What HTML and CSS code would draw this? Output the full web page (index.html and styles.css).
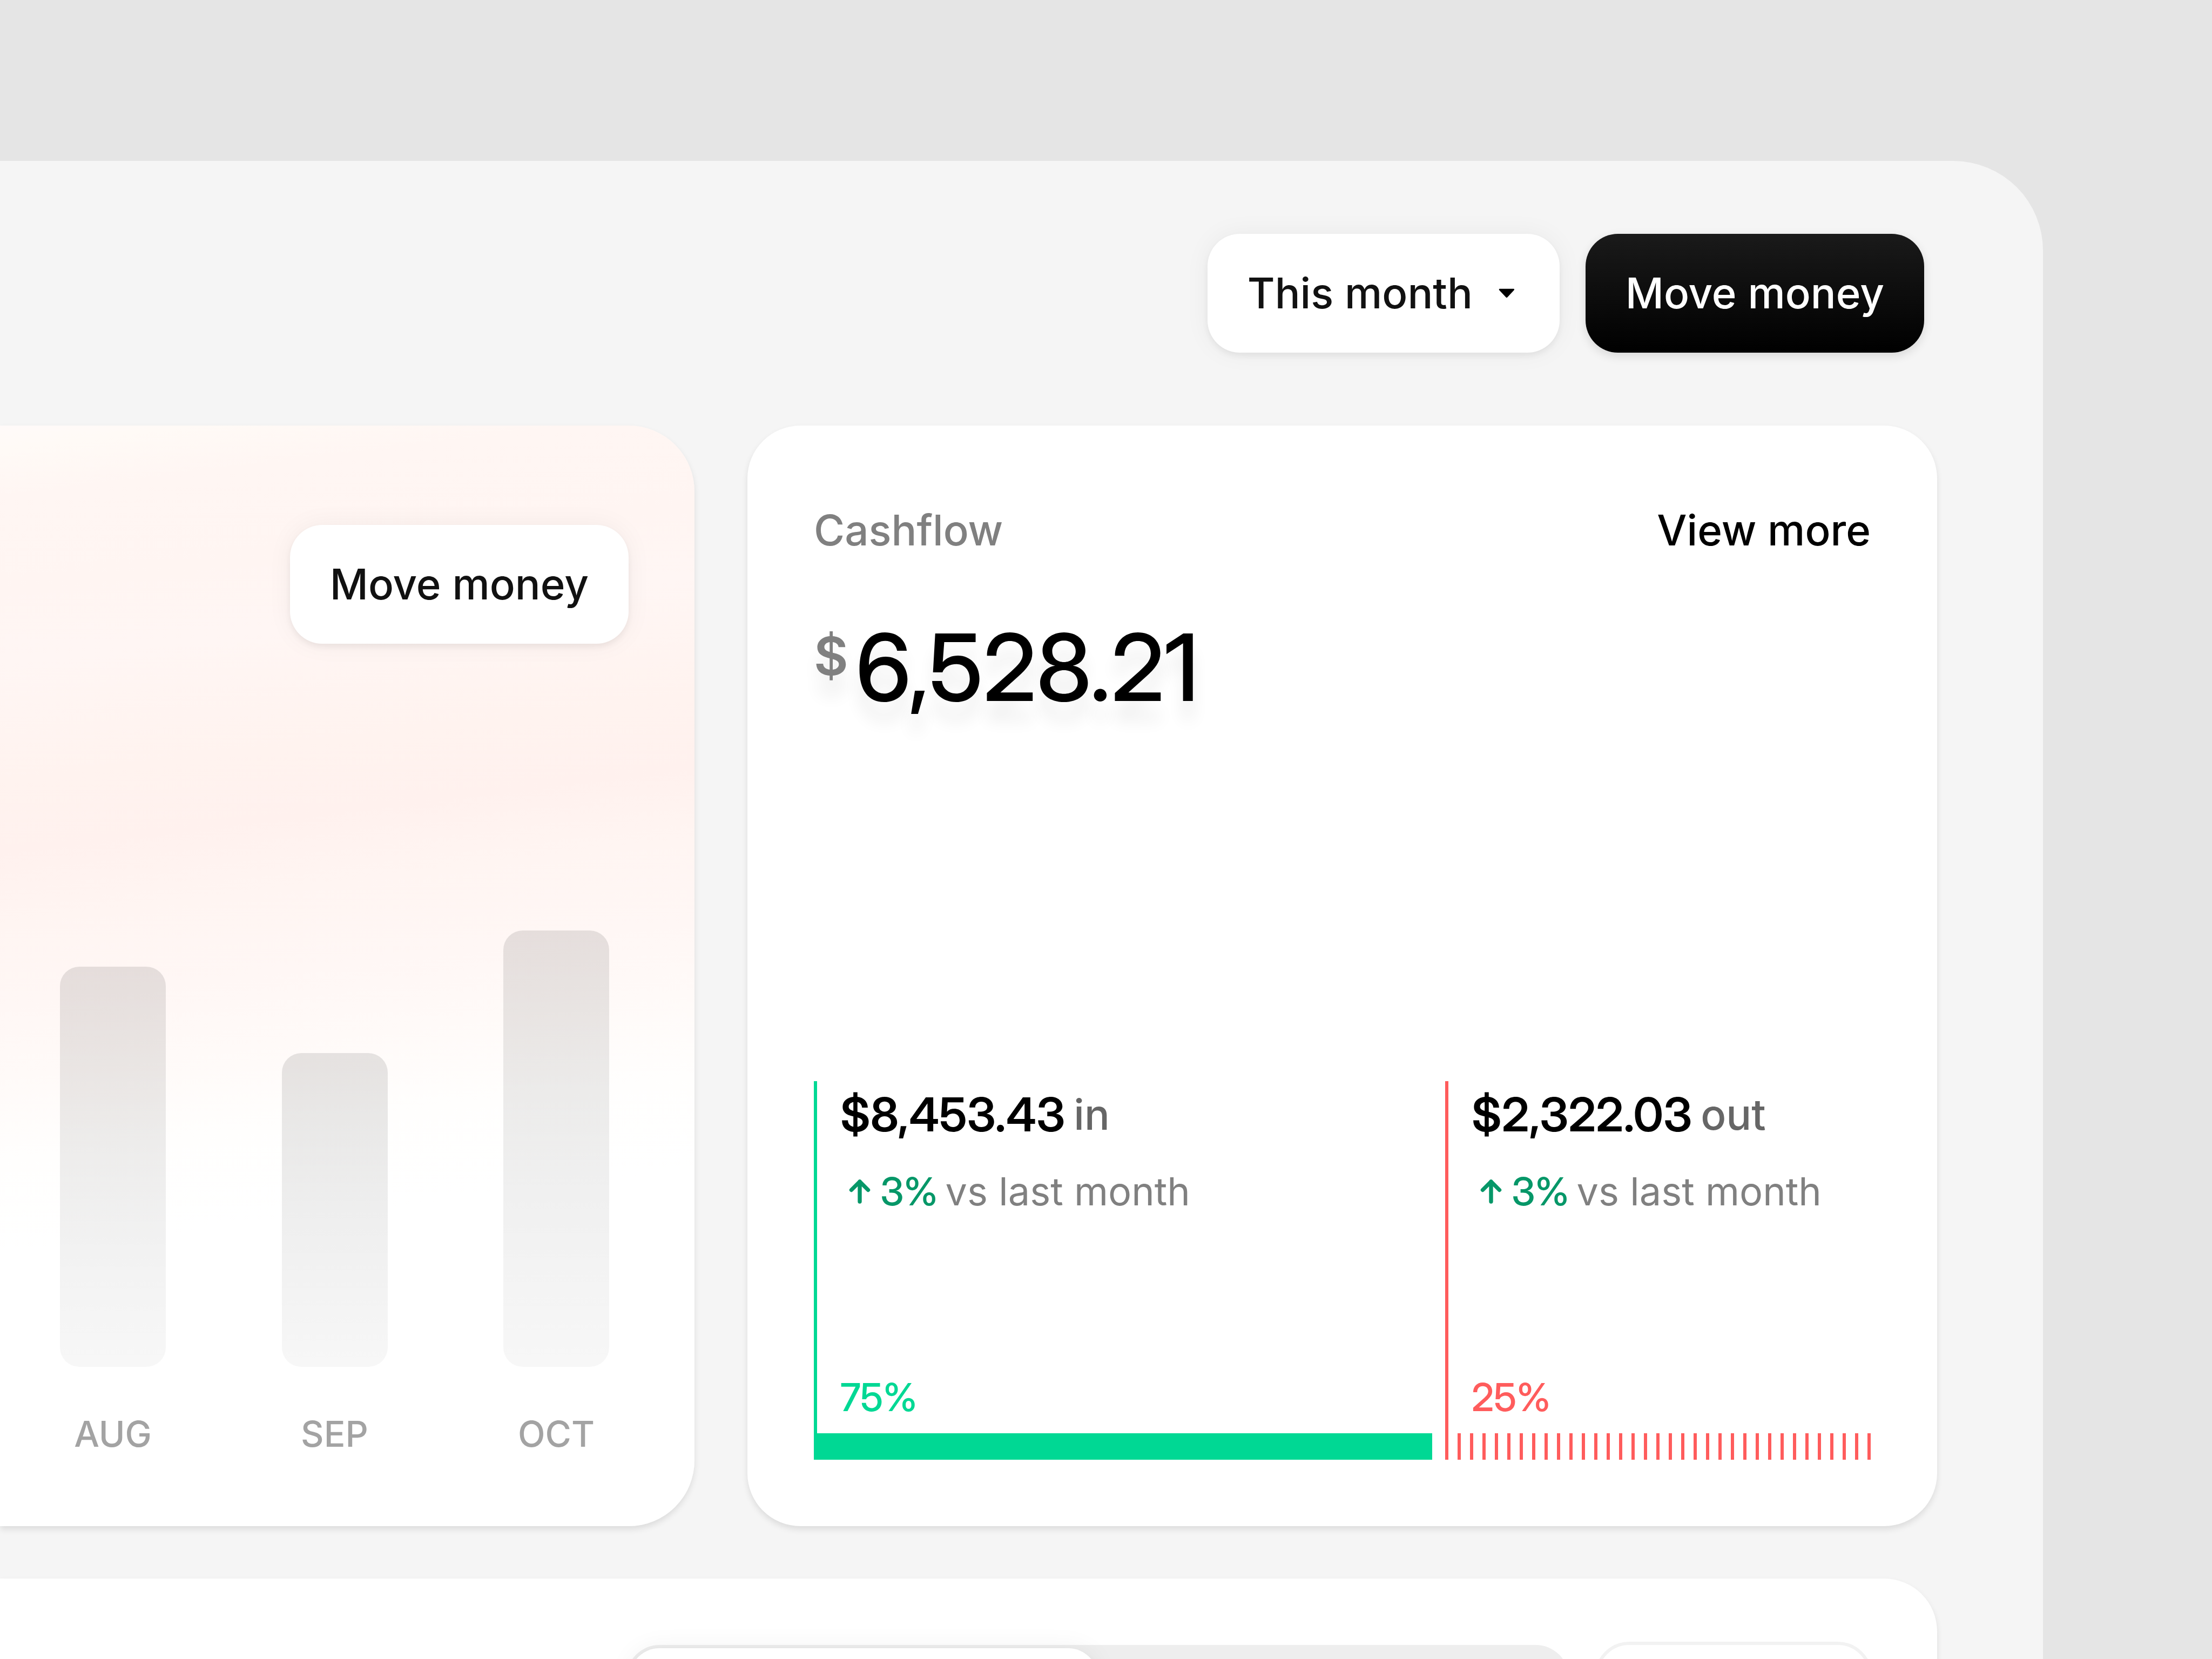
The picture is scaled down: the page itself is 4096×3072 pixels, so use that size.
FILE: index.html
```html
<!DOCTYPE html>
<html lang="en">
<head>
  <meta charset="utf-8">
  <meta name="viewport" content="width=device-width, initial-scale=1">
  <title>Cashflow dashboard</title>
  <link rel="stylesheet" href="styles.css">
</head>
<body>
  <main class="panel">
    <header class="toolbar">
      <div class="period">
        <select class="button period-select" aria-label="Period">
          <option>This month</option>
        </select>
        <svg class="period-caret" viewBox="0 0 48 48" aria-hidden="true">
          <path d="M11.2 15.700H36.6C38 15.700 38.6 17.200 37.600 18.200L25.200 31.600C24.400 32.400 23.400 32.400 22.600 31.600L10.200 18.200C9.200 17.200 9.800 15.700 11.200 15.700Z"/>
        </svg>
      </div>
      <button class="button button-dark" type="button">Move money</button>
    </header>

    <section class="cards">
      <article class="card balance">
        <button class="button" type="button">Move money</button>
        <ul class="chart">
          <li class="month"><span class="bar" style="height: 741px"></span><span>AUG</span></li>
          <li class="month"><span class="bar" style="height: 581px"></span><span>SEP</span></li>
          <li class="month"><span class="bar" style="height: 808px"></span><span>OCT</span></li>
        </ul>
      </article>

      <article class="card cashflow">
        <div class="card-head">
          <h2 class="card-title">Cashflow</h2>
          <a class="card-link" href="#cashflow">View more</a>
        </div>
        <p class="total"><span class="currency">$</span><span class="figure">6,528.21</span></p>
        <div class="flows">
          <section class="flow flow-in">
            <div class="flow-body">
              <p class="amount"><strong class="figure">$8,453.43</strong><span>in</span></p>
              <p class="trend">
                <svg class="arrow" viewBox="0 0 48 48" aria-hidden="true"><path d="M24 43V6M8.500 21.500 24 6 39.500 21.500"/></svg>
                <span class="change figure">3%</span>
                <span>vs last month</span>
              </p>
              <p class="share figure">75%</p>
            </div>
            <div class="meter"></div>
          </section>
          <section class="flow flow-out">
            <div class="flow-body">
              <p class="amount"><strong class="figure">$2,322.03</strong><span>out</span></p>
              <p class="trend">
                <svg class="arrow" viewBox="0 0 48 48" aria-hidden="true"><path d="M24 43V6M8.500 21.500 24 6 39.500 21.500"/></svg>
                <span class="change figure">3%</span>
                <span>vs last month</span>
              </p>
              <p class="share figure">25%</p>
            </div>
            <div class="meter"></div>
          </section>
        </div>
      </article>
    </section>

    <section class="card activity">
      <div class="tabs" role="tablist">
        <button class="tab tab-active" type="button" role="tab" aria-selected="true" aria-label="All"></button>
        <button class="tab" type="button" role="tab" aria-selected="false" aria-label="Pending"></button>
      </div>
      <button class="filter" type="button" aria-label="Filter"></button>
    </section>
  </main>
</body>
</html>
```

FILE: styles.css
```css
* {
  box-sizing: border-box;
}

body {
  display: flex;
  height: 100vh;
  margin: 0;
  overflow: hidden;
  background: #e5e5e5;
  color: #000;
  font-family: Inter, "Liberation Sans", sans-serif;
  font-size: 78px;
  font-weight: 500;
  line-height: 98px;
}

h2,
p,
ul {
  margin: 0;
  padding: 0;
}

.figure {
  font-family: "Inter Display", Inter, "Liberation Sans", sans-serif;
}

/* Panel */

.panel {
  flex: 1;
  min-width: 0;
  margin: 298px 313px 0 0;
  padding-right: 196px;
  border-top-right-radius: 166px;
  background: #f5f5f5;
}

.toolbar {
  display: flex;
  justify-content: flex-end;
  gap: 48px;
  padding: 135px 24px 135px 0;
}

.button {
  height: 220px;
  padding: 0 74px;
  border: 0;
  border-radius: 60px;
  background: #fff;
  box-shadow: 0 6px 12px rgba(0, 0, 0, 0.06), 0 0 48px rgba(0, 0, 0, 0.05);
  color: #111;
  font: inherit;
  white-space: nowrap;
}

.button-dark {
  background: linear-gradient(#1a1a1a, #000);
  box-shadow: 0 6px 18px rgba(0, 0, 0, 0.12);
  color: #fff;
}

.period {
  display: grid;
  align-items: center;
}

.period > * {
  grid-area: 1 / 1;
}

.period-select {
  appearance: none;
  padding-right: 160px;
}

.period-caret {
  width: 48px;
  height: 48px;
  margin-right: 74px;
  justify-self: end;
  pointer-events: none;
}

/* Cards */

.cards {
  display: grid;
  grid-template-columns: 1286fr 2203fr;
  gap: 98px;
}

.card {
  border-radius: 98px;
  background: #fff;
  box-shadow: 0 6px 12px rgba(0, 0, 0, 0.1);
}

.balance {
  display: flex;
  flex-direction: column;
  align-items: flex-end;
  padding: 184px 122px 130px 0;
  border-radius: 0 122px 122px 0;
  background: linear-gradient(173deg, #fffaf9 0%, #fffaf6 2%, #fff6f3 6%, #fff5f2 14%, #fff6f4 20%, #fff3ef 30%, #fff1ee 36%, #fff5f2 42%, #fff7f5 49%, #fffaf8 55%, #fffefd 62%, #fff 70%);
}

.chart {
  display: flex;
  align-self: stretch;
  align-items: flex-end;
  justify-content: space-between;
  margin-top: 531px;
  padding: 0 36px 0 111px;
  list-style: none;
  color: #a3a3a3;
  font-size: 66px;
  line-height: 80px;
}

.month {
  display: flex;
  flex-direction: column;
  align-items: center;
  gap: 84px;
}

.bar {
  width: 196px;
  border-radius: 36px;
  background: linear-gradient(rgba(0, 0, 0, 0.1), rgba(0, 0, 0, 0.03));
}

/* Cashflow */

.cashflow {
  padding: 145px 123px 123px;
}

.card-head {
  display: flex;
  justify-content: space-between;
}

.card-title {
  color: #808080;
  font-size: 78px;
  font-weight: 500;
}

.card-link {
  color: #000;
  text-decoration: none;
}

.total {
  display: flex;
  align-items: flex-start;
  gap: 14px;
  margin-top: 100px;
  font-size: 172px;
  line-height: 208px;
  text-shadow: 0 36px 30px rgba(0, 0, 0, 0.07);
}

.currency {
  margin-top: 24px;
  color: #808080;
  font-size: 98px;
  font-weight: 600;
  line-height: 120px;
}

.flows {
  display: grid;
  grid-template-columns: 1145fr 788fr;
  gap: 24px;
  margin-top: 663px;
}

.flow-body {
  padding: 10px 0 21px 43px;
  border-left: 6px solid;
  font-size: 72px;
  line-height: 92px;
}

.flow-in .flow-body {
  border-color: #00d894;
}

.flow-out .flow-body {
  border-color: #ff5c5c;
}

.amount {
  display: flex;
  align-items: center;
  gap: 16px;
  color: #666;
  font-size: 78px;
  line-height: 104px;
}

.amount strong {
  color: #000;
  font-size: 87px;
  font-weight: 600;
}

.trend {
  display: flex;
  align-items: center;
  gap: 14px;
  margin-top: 44px;
  color: #808080;
  font-weight: 400;
}

.arrow {
  width: 48px;
  height: 48px;
  margin-left: 12px;
  fill: none;
  stroke: #069768;
  stroke-width: 7.4;
  stroke-linecap: round;
  stroke-linejoin: round;
}

.change {
  color: #069768;
  font-weight: 500;
}

.share {
  margin-top: 289px;
}

.meter {
  height: 49px;
}

.flow-in .share {
  color: #00d894;
}

.flow-out .share {
  color: #ff5c5c;
}

.flow-in .meter {
  background: #00d894;
}

.flow-out .meter {
  background: repeating-linear-gradient(90deg, #ff5c5c 0 6px, transparent 6px 23px);
}

/* Activity */

.activity {
  display: flex;
  align-items: center;
  justify-content: flex-end;
  gap: 48px;
  margin-top: 97px;
  padding: 117px 120px 123px;
  border-radius: 0 98px 98px 0;
}

.tabs {
  display: flex;
  flex: 0 1 1745px;
  height: 220px;
  padding: 6px;
  border-radius: 61px;
  background: #eee;
}

.tab {
  flex: 1;
  border: 0;
  border-radius: 55px;
  background: transparent;
}

.tab-active {
  background: #fff;
  box-shadow: 0 6px 12px rgba(0, 0, 0, 0.06), 0 0 48px rgba(0, 0, 0, 0.06);
}

.filter {
  width: 514px;
  height: 232px;
  border: 6px solid #f2f2f2;
  border-radius: 64px;
  background: #fff;
}
```
